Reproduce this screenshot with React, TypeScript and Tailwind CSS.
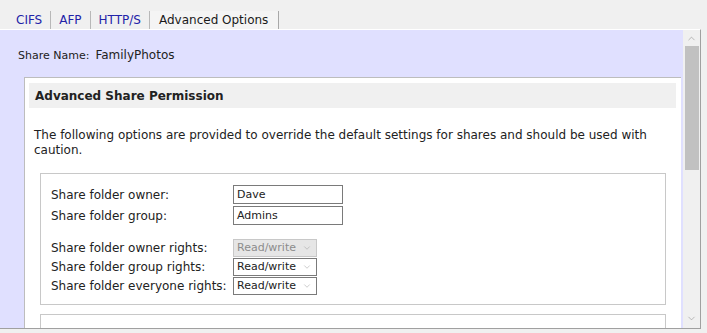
import { ChevronDown, ChevronUp } from "lucide-react";

const tabs = ["CIFS", "AFP", "HTTP/S", "Advanced Options"];

const Field = ({ value }: { value: string }) => (
  <div className="w-[110px] h-[19px] border border-[#7a7a7a] bg-white pl-[3px] text-[11px] leading-[17px] text-[#222]">
    {value}
  </div>
);

const Select = ({ disabled }: { disabled?: boolean }) => (
  <div
    className={
      disabled
        ? "w-[84px] h-[18px] border border-[#c8c8c8] bg-[#e6e6e6] pl-[3px] pr-[4px] flex items-center justify-between text-[11px] text-[#8c8c8c]"
        : "w-[84px] h-[18px] border border-[#7a7a7a] bg-white pl-[3px] pr-[4px] flex items-center justify-between text-[11px] text-[#222]"
    }
  >
    <span>Read/write</span>
    <ChevronDown size={10} strokeWidth={1.2} className="text-[#9a9a9a]" />
  </div>
);

const Row = ({ label, children }: { label: string; children: React.ReactNode }) => (
  <div className="flex items-center">
    <span className="w-[182px]">{label}</span>
    {children}
  </div>
);

export default function App() {
  return (
    <div
      className="w-[707px] h-[333px] bg-[#f0f0f0] text-[#222] text-[12px] overflow-hidden"
      style={{ fontFamily: '"DejaVu Sans", Verdana, sans-serif' }}
    >
      <div className="h-[29px] flex items-end pl-[8px]">
        {tabs.map((t, i) => (
          <div
            key={t}
            className={
              i === tabs.length - 1
                ? "h-[18px] pl-[9px] pr-[10px] flex items-center text-[12px] text-[#1a1a1a] border-r border-[#a8a8a8] bg-[#f4f4f4]"
                : "h-[18px] px-[8px] flex items-center text-[12px] text-[#2222a8] border-r border-[#b8b8b8]"
            }
          >
            {t}
          </div>
        ))}
      </div>

      <div className="w-[701px] h-[300px] flex border-t border-white border-r border-b border-r-[#a0a0a0] border-b-[#a0a0a0]">
        <div className="w-[683px] bg-[#e0e0ff] overflow-hidden">
          <div className="pl-[18px] pt-[16px] h-[47px] leading-[18px]">
            <span className="text-[11px]">Share Name:</span>
            <span className="ml-[6px]">FamilyPhotos</span>
          </div>

          <div className="ml-[24px] w-[657px] bg-white border-t border-l border-[#bdbdbd] pt-[5px] pl-[4px] pr-[5px] pb-[10px]">
            <div className="h-[25px] bg-[#f0f0f0] pl-[6px] flex items-center font-bold text-[12px]">
              Advanced Share Permission
            </div>
            <p className="pl-[5px] pt-[20px] leading-[15px] pr-[20px]">
              The following options are provided to override the default settings for shares and should be used with caution.
            </p>
            <div className="mt-[15px] ml-[11px] w-[626px] border border-[#c8c8c8] pl-[10px] pt-[11px] pb-[9px] flex flex-col">
              <div className="flex flex-col gap-[2px]">
                <Row label="Share folder owner:">
                  <Field value="Dave" />
                </Row>
                <Row label="Share folder group:">
                  <Field value="Admins" />
                </Row>
              </div>
              <div className="flex flex-col gap-[1px] mt-[14px]">
                <Row label="Share folder owner rights:">
                  <Select disabled />
                </Row>
                <Row label="Share folder group rights:">
                  <Select />
                </Row>
                <Row label="Share folder everyone rights:">
                  <Select />
                </Row>
              </div>
            </div>
            <div className="mt-[9px] ml-[11px] w-[626px] h-[40px] border border-[#c8c8c8]" />
          </div>
        </div>

        <div className="w-[17px] bg-[#f0f0f0] flex flex-col items-center">
          <ChevronUp size={11} strokeWidth={1.2} className="text-[#8a8a8a] mt-[3px]" />
          <div className="w-[14px] h-[124px] bg-[#c1c1c1] mt-[2px]" />
          <div className="flex-1" />
          <ChevronDown size={11} strokeWidth={1.2} className="text-[#8a8a8a] mb-[4px]" />
        </div>
      </div>
    </div>
  );
}
